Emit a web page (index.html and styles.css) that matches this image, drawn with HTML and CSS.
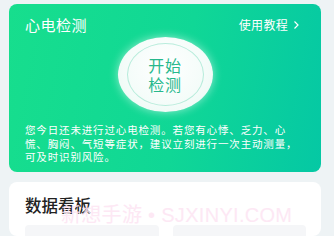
FILE: index.html
```html
<!DOCTYPE html>
<html lang="zh">
<head>
<meta charset="utf-8">
<title>心电检测</title>
<link rel="stylesheet" href="styles.css">
</head>
<body>
<div class="page">
  <section class="ecg">
    <div class="ecg-head">
      <h1 class="ecg-title">心电检测</h1>
      <a class="ecg-link">使用教程<svg class="chev" width="7" height="10" viewBox="0 0 7 10"><path d="M1.5 1.5 L5 5 L1.5 8.5" fill="none" stroke="#fff" stroke-width="1.2"/></svg></a>
    </div>
    <div class="start-wrap">
      <div class="start-btn">
        <div class="start-ring"></div>
        <span class="start-text">开始<br>检测</span>
      </div>
    </div>
    <p class="ecg-desc">您今日还未进行过心电检测。若您有心悸、乏力、心<br>慌、胸闷、气短等症状，建议立刻进行一次主动测量，可及时识别风险。</p>
  </section>
  <section class="board">
    <h2 class="board-title">数据看板</h2>
    <div class="board-grid">
      <div class="tile"></div>
      <div class="tile"></div>
    </div>
  </section>
</div>
<div class="watermark">新想手游 • SJXINYI.COM</div>
</body>
</html>
```
FILE: styles.css
```css
* { box-sizing: border-box; }
html, body { margin: 0; padding: 0; }
body {
  background: #eef3f5;
  font-family: "Noto Sans CJK SC", "Noto Sans", sans-serif;
  width: 334px;
  height: 236px;
  overflow: hidden;
  position: relative;
}
.page {
  padding: 4px 13px 0 9px;
  display: flex;
  flex-direction: column;
  gap: 10px;
}
.ecg {
  height: 168px;
  border-radius: 8px;
  background: linear-gradient(100deg, #17de8d 0%, #10d796 55%, #05c8a4 100%);
  padding: 10px 20px 0 16px;
  color: #fff;
}
.ecg-head {
  display: flex;
  justify-content: space-between;
  align-items: center;
  height: 22px;
}
.ecg-title {
  margin: 0;
  font-size: 15px;
  font-weight: 400;
  line-height: 22px;
  letter-spacing: 0.5px;
}
.ecg-link {
  font-size: 12px;
  line-height: 22px;
  display: flex;
  align-items: center;
  gap: 5px;
  letter-spacing: 0.3px;
  margin-right: 1px;
}
.start-wrap {
  display: flex;
  justify-content: center;
  margin-top: 1px;
  padding-left: 4px;
}
.start-btn {
  position: relative;
  width: 95px;
  height: 75px;
  border-radius: 50%;
  background: radial-gradient(ellipse at 50% 40%, #ffffff 0%, #f4fcf9 60%, #e6f8f1 100%);
  box-shadow: 0 0 10px rgba(255,255,255,0.55);
  display: flex;
  align-items: center;
  justify-content: center;
}
.start-ring {
  position: absolute;
  inset: 6px 9px;
  border-radius: 50%;
  border: 1px solid rgba(40, 200, 150, 0.3);
}
.start-text {
  position: relative;
  color: #27b88c;
  font-size: 16px;
  line-height: 19px;
  text-align: center;
  letter-spacing: 0.8px;
}
.ecg-desc {
  margin: 11px 0 0;
  font-size: 10.5px;
  line-height: 13.5px;
  letter-spacing: 0.85px;
  color: #fff;
}
.board {
  background: #fff;
  border-radius: 8px;
  padding: 11px 15px 0 16px;
  height: 54px;
}
.board-title {
  margin: 0;
  font-size: 16.5px;
  line-height: 24px;
  font-weight: 500;
  color: #222;
}
.board-grid {
  margin-top: 8px;
  display: grid;
  grid-template-columns: 1fr 1fr;
  gap: 14px;
}
.tile {
  height: 11px;
  background: #f5f6f8;
  border-radius: 4px 4px 0 0;
}
.watermark {
  position: absolute;
  left: 61px;
  top: 203px;
  font-family: "Liberation Sans", "Noto Sans CJK SC", sans-serif;
  font-size: 20px;
  line-height: 24px;
  color: #fde4f3;
  white-space: nowrap;
  letter-spacing: 0.3px;
  opacity: 0.85;
}
```
